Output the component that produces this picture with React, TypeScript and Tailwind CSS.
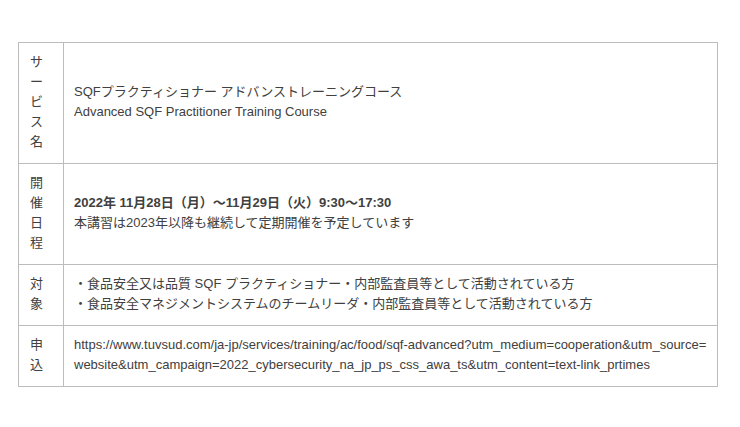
const rows = [
  {
    label: "サービス名",
    body: (
      <>
        <p>SQFプラクティショナー アドバンストレーニングコース</p>
        <p>Advanced SQF Practitioner Training Course</p>
      </>
    ),
  },
  {
    label: "開催日程",
    body: (
      <>
        <p className="font-bold">2022年 11月28日（月）〜11月29日（火）9:30〜17:30</p>
        <p>本講習は2023年以降も継続して定期開催を予定しています</p>
      </>
    ),
  },
  {
    label: "対象",
    body: (
      <>
        <p>・食品安全又は品質 SQF プラクティショナー・内部監査員等として活動されている方</p>
        <p>・食品安全マネジメントシステムのチームリーダ・内部監査員等として活動されている方</p>
      </>
    ),
  },
  {
    label: "申込",
    body: (
      <p className="break-all">
        https://www.tuvsud.com/ja-jp/services/training/ac/food/sqf-advanced?utm_medium=cooperation&amp;utm_source=website&amp;utm_campaign=2022_cybersecurity_na_jp_ps_css_awa_ts&amp;utm_content=text-link_prtimes
      </p>
    ),
  },
];

export default function App() {
  return (
    <div className="w-[740px] h-[427px] bg-white pt-[42px] pl-[18px] font-['Liberation_Sans','Noto_Sans_CJK_JP',sans-serif] text-[13px] leading-[20px] text-[#404040]">
      <table className="w-[700px] border-collapse border border-[#bcbcbc]">
        <tbody>
          {rows.map((r) => (
            <tr key={r.label}>
              <td className="w-[45px] border border-[#bcbcbc] pl-[11px] pr-[11px] pt-[9px] pb-[11px] align-top break-all">
                {r.label}
              </td>
              <td className="border border-[#bcbcbc] px-[10px] pt-[9px] pb-[11px] align-middle">{r.body}</td>
            </tr>
          ))}
        </tbody>
      </table>
    </div>
  );
}
